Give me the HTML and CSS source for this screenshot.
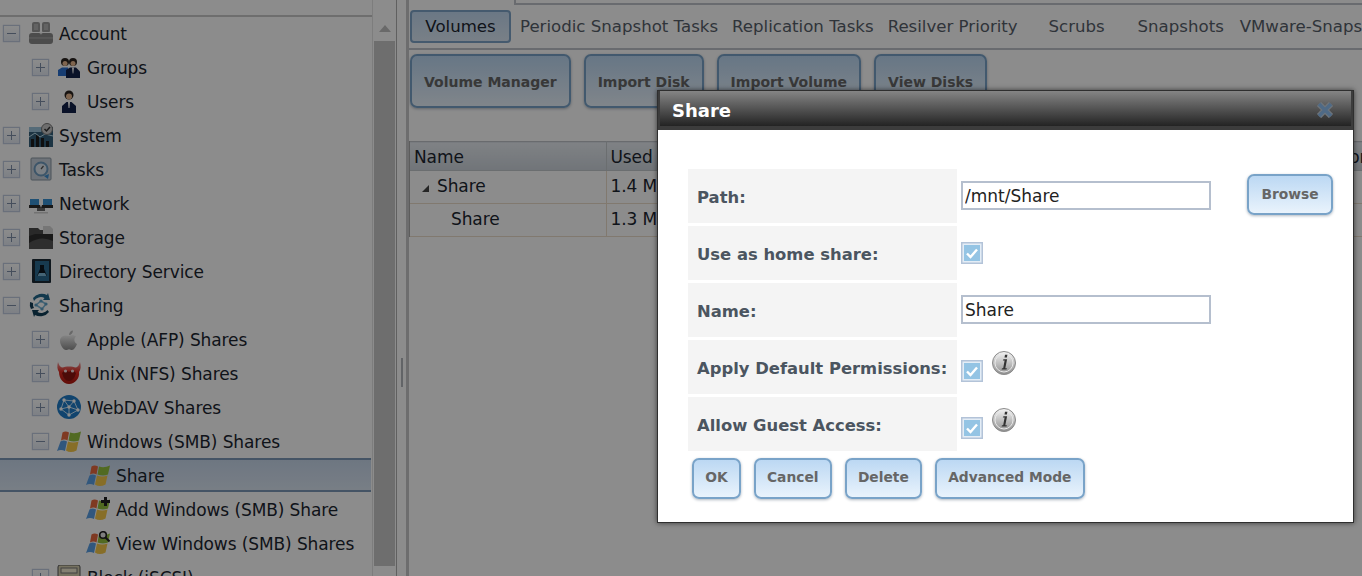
FILE: index.html
```html
<!DOCTYPE html>
<html lang="en">
<head>
<meta charset="utf-8">
<title>Share</title>
<link rel="stylesheet" href="styles.css">
</head>
<body>
<svg class="sprite" aria-hidden="true">
  <defs>
    <linearGradient id="metal" x1="0" y1="0" x2="0" y2="1"><stop offset="0" stop-color="#f4f4f4"/><stop offset="1" stop-color="#8e8e8e"/></linearGradient>
    <linearGradient id="red" x1="0" y1="0" x2="0" y2="1"><stop offset="0" stop-color="#f0a0a0"/><stop offset=".45" stop-color="#e02a20"/><stop offset="1" stop-color="#b01810"/></linearGradient>
    <symbol id="i-account" viewBox="0 0 24 24">
      <path d="M5 1h4q2 0 2 2v7q0 1-1 1H4q-1 0-1-1V3q0-2 2-2zM15 1h4q2 0 2 2v7q0 1-1 1h-6q-1 0-1-1V3q0-2 2-2z" fill="#9c9c9c"/>
      <path d="M3 12h7q2 0 2 2 0-2 2-2h7q3 0 3 3v5q0 3-3 3H3q-3 0-3-3v-5q0-3 3-3z" fill="#8b8b8b"/>
      <path d="M5 3h4v6H5zM15 3h4v6h-4z" fill="#b4b4b4"/>
      <path d="M0 17h24" stroke="#b0b0b0" stroke-width="1"/>
    </symbol>
    <symbol id="i-groups" viewBox="0 0 24 24">
      <circle cx="8" cy="7" r="4" fill="#2a2420"/><circle cx="16" cy="7" r="4" fill="#2a2420"/>
      <circle cx="8" cy="8.500" r="2.500" fill="#e8b890"/><circle cx="16" cy="8.500" r="2.500" fill="#e8b890"/>
      <path d="M1 21v-6l4-2.500h6v8.500z" fill="#2b6fd0"/><path d="M9 23v-8l4-2.500h6l4 4V23z" fill="#12214a"/><path d="M15 12.500h2l-.7 6h-.6z" fill="#fff"/>
    </symbol>
    <symbol id="i-user" viewBox="0 0 24 24">
      <circle cx="12" cy="6" r="4.500" fill="#2a2420"/><circle cx="12" cy="7.500" r="3" fill="#e8b890"/>
      <path d="M5 24v-7l4.500-4h5l4.500 4v7z" fill="#13214a"/><path d="M11 13h2l-.5 6h-1z" fill="#fff"/>
    </symbol>
    <symbol id="i-system" viewBox="0 0 24 24">
      <rect x="0" y="4" width="24" height="20" fill="#33607a"/>
      <path d="M0 4h16l-4 5H0z" fill="#9cc4da"/>
      <path d="M2 24v-8h3v8zM7 24v-12h3v12zM12 24v-9h3v9zM17 24v-6h3v6z" fill="#1c1c1c"/>
      <path d="M0 14l6-4 5 4 5-3 8 2" fill="none" stroke="#bfe0ef" stroke-width="1"/>
      <circle cx="18" cy="6" r="5.500" fill="#c8c8c8" stroke="#777"/>
      <path d="M15.500 6l2 2 3.500-4" fill="none" stroke="#333" stroke-width="1.500"/>
    </symbol>
    <symbol id="i-tasks" viewBox="0 0 24 24">
      <rect x="2" y="1" width="20" height="22" rx="1" fill="#c8d2dc" stroke="#8a98a4"/>
      <circle cx="12" cy="12" r="6.500" fill="#dfe8f0" stroke="#6f9cc0" stroke-width="2"/>
      <path d="M12 12l2.500-3" stroke="#555" stroke-width="1.200"/>
      <path d="M15 19l5-2-1 5z" fill="#3f8fd0"/>
    </symbol>
    <symbol id="i-network" viewBox="0 0 24 24">
      <path d="M1 8h9v6H1zM14 8h9v6h-9z" fill="#3a93d4"/>
      <path d="M0 14h11l1 3H0zM13 14h11v3H12z" fill="#2d2d2d"/>
      <path d="M8 17h8v3H8z" fill="#6a6a6a"/><path d="M5 21h14v1.500H5z" fill="#d0d0d0"/>
    </symbol>
    <symbol id="i-storage" viewBox="0 0 24 24">
      <path d="M0 3h9l2 2h13v19H0z" fill="#4c4c4c"/>
      <path d="M14 1h7l3 3v6H14z" fill="#d8d8d8"/>
      <path d="M0 24V11l6-2h18v15z" fill="#2f2f2f"/>
      <path d="M0 24V18q12-8 24-2v8z" fill="#545454"/>
    </symbol>
    <symbol id="i-directory" viewBox="0 0 24 24">
      <rect x="3" y="0" width="19" height="24" rx="1" fill="#1d2b36"/>
      <rect x="6" y="2" width="14" height="20" fill="#2b6a90"/>
      <path d="M11 6h4v4l3 7h-10l3-7z" fill="#0c1620"/><path d="M10 14h6l1.500 3h-9z" fill="#7db6d6"/>
    </symbol>
    <symbol id="i-sharing" viewBox="0 0 24 24">
      <path d="M4 5a11 11 0 0 1 14-3l1-2 2 7-7 0 1.500-2A8 8 0 0 0 5 8z" fill="#21688c"/>
      <path d="M20 19a11 11 0 0 1-14 3l-1 2-2-7 7 0-1.500 2a8 8 0 0 0 10-2z" fill="#123f58"/>
      <path d="M2 16a11 11 0 0 1-1-7l3 1a8 8 0 0 0 1 5z" fill="#153f58"/>
      <path d="M7 12l5-4 5 3-4 5z" fill="none" stroke="#7db6d6" stroke-width="1.600"/>
      <circle cx="12" cy="8" r="1.600" fill="#5da0c6"/><circle cx="17" cy="11" r="1.600" fill="#5da0c6"/><circle cx="7" cy="12" r="1.600" fill="#5da0c6"/><circle cx="13" cy="16" r="1.600" fill="#5da0c6"/>
    </symbol>
    <symbol id="i-apple" viewBox="0 0 24 24">
      <path d="M12 9c2-1.500 5-1.500 7 .5-2.500 2-2 6 1 7.500-1 2.500-3 6-5 6-1 0-2-.8-3-.8s-2 .8-3 .8c-2.500 0-6-5-6-9 0-5 5-6.500 9-5z" fill="url(#metal)"/>
      <path d="M12 8c0-2.500 2-4.500 4-4.500 0 2.500-2 4.500-4 4.500z" fill="#bdbdbd"/>
    </symbol>
    <symbol id="i-beastie" viewBox="0 0 24 24">
      <path d="M1 1c1 3 2 5 4 5.500 4-1.500 10-1.500 14 0 2-.5 3-2.500 4-5.500 1 4 1 7-1 10 1 6-4 12-10 12S2 17 2 11C0 8 0 5 1 1z" fill="url(#red)"/>
      <path d="M5 12q3-4 7-1 4-3 7 1-2 8-7 8t-7-8z" fill="#8a1410"/>
      <circle cx="8.500" cy="10" r="1.600" fill="#f6e0e0"/><circle cx="15.500" cy="10" r="1.600" fill="#f6e0e0"/>
    </symbol>
    <symbol id="i-globe" viewBox="0 0 24 24">
      <circle cx="12" cy="12" r="12" fill="#1f7dc8"/>
      <path d="M7 5l10 1 4 9-9 5-8-6zM7 5l5 7 9 3M12 12l-8 2M12 12v8M17 6l-5 6" fill="none" stroke="#cfe8fa" stroke-width="1"/>
      <circle cx="7" cy="5" r="1.700" fill="#fff"/><circle cx="17" cy="6" r="1.700" fill="#fff"/><circle cx="21" cy="15" r="1.700" fill="#fff"/><circle cx="12" cy="20" r="1.700" fill="#fff"/><circle cx="4" cy="14" r="1.700" fill="#fff"/><circle cx="12" cy="12" r="1.700" fill="#fff"/>
    </symbol>
    <symbol id="i-windows" viewBox="0 0 24 24">
      <path d="M5.500 3.500q3-2 6.500 0l-1.500 8q-3-2-6.500 0z" fill="#e8683e"/>
      <path d="M13 3.500q5 2 11-1l-2 9q-5 2-10.500 0z" fill="#94c23e"/>
      <path d="M3.500 12.500q3-2 6.500 0L8 22q-4-2-8 0z" fill="#5a9fe4"/>
      <path d="M11 12.500q5 2 10.500 0l-2 9q-6 3-10.500 0z" fill="#f6c84a"/>
    </symbol>
    <symbol id="i-plus-badge" viewBox="0 0 24 24">
      <path d="M18 0h3v3h3v3h-3v3h-3V6h-3V3h3z" fill="#222"/>
    </symbol>
    <symbol id="i-search-badge" viewBox="0 0 24 24">
      <circle cx="17" cy="4" r="3.300" fill="#e8e8e8" stroke="#222" stroke-width="1.600"/>
      <path d="M19.500 6.500l4 4" stroke="#222" stroke-width="2"/>
    </symbol>
    <symbol id="i-block" viewBox="0 0 24 24">
      <rect x="1" y="0" width="22" height="24" rx="2" fill="#d8d0b0" stroke="#555"/>
      <rect x="4" y="3" width="16" height="5" fill="#f0ead0" stroke="#777"/>
    </symbol>
    <symbol id="i-info" viewBox="0 0 24 24">
      <circle cx="12" cy="12" r="11.500" fill="url(#metal)" stroke="#8a8a8a"/>
      <circle cx="12" cy="12" r="9" fill="none" stroke="#e8e8e8" stroke-width="1"/>
      <path d="M11.500 8.200h3.600l-1.800 9h1.600l-.4 1.300H9.600l.4-1.300h1.200l1.400-7.700h-1.800zM13 3.800h2.400l-.5 2.800h-2.400z" fill="#333"/>
    </symbol>
    <symbol id="i-check" viewBox="0 0 22 22">
      <rect x="0.750" y="0.750" width="20.500" height="20.500" fill="#e4edf6" stroke="#b3c3d8" stroke-width="1.500"/>
      <rect x="3" y="3" width="16" height="16" fill="#94c4e4"/>
      <path d="M6 11.500l3.500 3.500 6.500-7.500" fill="none" stroke="#fff" stroke-width="2.400"/>
    </symbol>
  </defs>
</svg>

<div class="app">
  <aside class="sidebar">
    <div class="tree-wrap">
      <ul class="tree">
        <li class="row l0"><span class="exp open"></span><svg class="ic"><use href="#i-account"/></svg><span class="label">Account</span></li>
        <li class="row l1"><span class="exp"></span><svg class="ic"><use href="#i-groups"/></svg><span class="label">Groups</span></li>
        <li class="row l1"><span class="exp"></span><svg class="ic"><use href="#i-user"/></svg><span class="label">Users</span></li>
        <li class="row l0"><span class="exp"></span><svg class="ic"><use href="#i-system"/></svg><span class="label">System</span></li>
        <li class="row l0"><span class="exp"></span><svg class="ic"><use href="#i-tasks"/></svg><span class="label">Tasks</span></li>
        <li class="row l0"><span class="exp"></span><svg class="ic"><use href="#i-network"/></svg><span class="label">Network</span></li>
        <li class="row l0"><span class="exp"></span><svg class="ic"><use href="#i-storage"/></svg><span class="label">Storage</span></li>
        <li class="row l0"><span class="exp"></span><svg class="ic"><use href="#i-directory"/></svg><span class="label">Directory Service</span></li>
        <li class="row l0"><span class="exp open"></span><svg class="ic"><use href="#i-sharing"/></svg><span class="label">Sharing</span></li>
        <li class="row l1"><span class="exp"></span><svg class="ic"><use href="#i-apple"/></svg><span class="label">Apple (AFP) Shares</span></li>
        <li class="row l1"><span class="exp"></span><svg class="ic"><use href="#i-beastie"/></svg><span class="label">Unix (NFS) Shares</span></li>
        <li class="row l1"><span class="exp"></span><svg class="ic"><use href="#i-globe"/></svg><span class="label">WebDAV Shares</span></li>
        <li class="row l1"><span class="exp open"></span><svg class="ic"><use href="#i-windows"/></svg><span class="label">Windows (SMB) Shares</span></li>
        <li class="row l2 selected"><span class="exp none"></span><svg class="ic"><use href="#i-windows"/></svg><span class="label">Share</span></li>
        <li class="row l2"><span class="exp none"></span><svg class="ic"><use href="#i-windows"/><use href="#i-plus-badge"/></svg><span class="label">Add Windows (SMB) Share</span></li>
        <li class="row l2"><span class="exp none"></span><svg class="ic"><use href="#i-windows"/><use href="#i-search-badge"/></svg><span class="label">View Windows (SMB) Shares</span></li>
        <li class="row l1"><span class="exp"></span><svg class="ic"><use href="#i-block"/></svg><span class="label">Block (iSCSI)</span></li>
      </ul>
    </div>
    <div class="scrollbar"><span class="arrow"></span><span class="thumb"></span></div>
  </aside>
  <div class="splitter"><span class="grip"></span></div>
  <main class="main">
    <div class="top-tabs"><span class="top-tab"></span></div>
    <nav class="tabs">
      <span class="tab active">Volumes</span>
      <span class="tab">Periodic Snapshot Tasks</span>
      <span class="tab">Replication Tasks</span>
      <span class="tab">Resilver Priority</span>
      <span class="tab wide">Scrubs</span>
      <span class="tab wide">Snapshots</span>
      <span class="tab">VMware-Snapshots</span>
    </nav>
    <div class="toolbar">
      <span class="btn tall">Volume Manager</span>
      <span class="btn tall">Import Disk</span>
      <span class="btn tall">Import Volume</span>
      <span class="btn tall">View Disks</span>
    </div>
    <table class="grid">
      <thead>
        <tr><th class="c-name">Name</th><th class="c-used">Used</th><th class="c-a">Available</th><th class="c-b">Compression</th><th class="c-c">Compression Ratio</th><th class="c-d">Status</th><th class="c-d">Readonly</th><th>Comments</th></tr>
      </thead>
      <tbody>
        <tr><td><span class="twist"></span>Share</td><td>1.4 MiB</td><td></td><td></td><td></td><td></td><td></td><td></td></tr>
        <tr><td class="child">Share</td><td>1.3 MiB</td><td></td><td></td><td></td><td></td><td></td><td></td></tr>
      </tbody>
    </table>
  </main>
</div>

<div class="overlay"></div>

<section class="dialog">
  <header class="dialog-title"><h1>Share</h1><span class="close">
    <svg width="18" height="16" viewBox="0 0 18 16"><path d="M3 2l12 12M15 2L3 14" fill="none" stroke="#6f757b" stroke-width="6"/><path d="M3 2l12 12M15 2L3 14" fill="none" stroke="#4f6a86" stroke-width="3.500"/></svg></span></header>
  <div class="dialog-body">
    <table class="form">
      <tr><th>Path:</th><td><div class="path-cell"><input class="text" type="text" value="/mnt/Share"><span class="btn browse">Browse</span></div></td></tr>
      <tr><th>Use as home share:</th><td><svg class="check"><use href="#i-check"/></svg></td></tr>
      <tr><th>Name:</th><td><input class="text" type="text" value="Share"></td></tr>
      <tr><th>Apply Default Permissions:</th><td><div class="opt-cell"><svg class="check"><use href="#i-check"/></svg><svg class="info"><use href="#i-info"/></svg></div></td></tr>
      <tr><th>Allow Guest Access:</th><td><div class="opt-cell"><svg class="check"><use href="#i-check"/></svg><svg class="info"><use href="#i-info"/></svg></div></td></tr>
    </table>
    <div class="actions">
      <span class="btn">OK</span>
      <span class="btn">Cancel</span>
      <span class="btn">Delete</span>
      <span class="btn">Advanced Mode</span>
    </div>
  </div>
</section>
</body>
</html>
```

FILE: styles.css
```css
* { box-sizing: border-box; }
html, body { margin: 0; padding: 0; height: 576px; overflow: hidden; background: #fff; }
body { font-family: "DejaVu Sans", Verdana, sans-serif; font-size: 17px; letter-spacing: -0.1px; color: #1c2630; }
.sprite { position: absolute; width: 0; height: 0; }

.app { display: flex; height: 576px; }

.sidebar { width: 397px; flex: none; display: flex; border-right: 1px solid #b0b0b0; }
.tree-wrap { width: 372px; flex: none; padding-right: 1px; border-top: 2px solid #c8c8c8; margin-top: 15px; overflow: hidden; }
.tree { list-style: none; margin: -1px 0 0; padding: 0; }
.row { display: flex; align-items: center; height: 34px; padding-left: 3px; white-space: nowrap; }
.row.l1 { padding-left: 32px; }
.row.l1 .exp { margin-right: 8px; }
.row.l2 { padding-left: 60px; }
.row.selected { background: linear-gradient(#c8d8ec, #dbe6f3 ); border-top: 2px solid #7e9ab8; border-bottom: 2px solid #7e9ab8; }
.label { padding-top: 1px; }
.exp { position: relative; width: 17px; height: 17px; flex: none; margin-right: 9px; border: 1px solid #c2cde0; background: linear-gradient(#fff, #e4eaf3); box-shadow: 0 0 1px #b8c2d0; }
.exp::before { content: ""; position: absolute; left: 3px; right: 3px; top: 7px; height: 1px; background: #7f8fa8; }
.exp::after { content: ""; position: absolute; top: 3px; bottom: 3px; left: 7px; width: 1px; background: #7f8fa8; }
.exp.open::after { display: none; }
.exp.none { visibility: hidden; }
.ic { width: 24px; height: 24px; flex: none; margin-right: 6px; }

.scrollbar { position: relative; width: 24px; flex: none; background: #fff; border-left: 1px solid #e4e4e4; display: flex; flex-direction: column; align-items: center; }
.arrow { width: 0; height: 0; margin-top: 25px; border-left: 6px solid transparent; border-right: 6px solid transparent; border-bottom: 7px solid #c0c0c0; }
.thumb { width: 21px; height: 525px; margin-top: 9px; background: #c9c9c9; }

.splitter { width: 12px; flex: none; position: relative; background: #fff; border-right: 3px solid #c6c6c8; }
.grip { position: absolute; left: 4px; top: 358px; width: 2px; height: 29px; background: #b2b6bc; }

.main { flex: 1; min-width: 0; overflow: hidden; }
.top-tabs { height: 5px; border-bottom: 2px solid #c0c4ca; display: flex; }
.top-tab { width: 107px; height: 5px; border: 2px solid #c0c4ca; border-left: 0; border-top: 0; border-bottom: 0; background: #fff; }

.tabs { display: flex; align-items: center; height: 45px; padding-left: 1px; border-bottom: 2px solid #c0c4ca; white-space: nowrap; color: #57606a; font-size: 16.600px; letter-spacing: 0; }
.tab { display: block; padding: 0 7px; line-height: 29px; text-align: center; flex: none; }
.tab.wide { width: 104px; }
.tab.active { width: 101px; height: 33px; margin-right: 2px; line-height: 29px; border: 2px solid #7fa5c8; border-radius: 4px; background: linear-gradient(#c3daf2, #dce9f6); color: #1c2630; }

.btn { display: inline-flex; align-items: center; justify-content: center; height: 41px; padding: 0 11.200px 2px; border: 2px solid #79a3c8; border-radius: 7px; background: linear-gradient(#bcd8f3, #e9f3fc); box-shadow: 0 1px 3px #b0b8c0; font-weight: 700; font-size: 13.800px; letter-spacing: 0; color: #666; white-space: nowrap; }
.btn.browse { width: 86px; }
.toolbar { display: flex; gap: 13px; padding: 4px 0 0 1px; height: 91px; }
.btn.tall { height: 54px; padding: 2px 12px 0; font-size: 14px; }

.grid { border-collapse: collapse; table-layout: fixed; width: 1000px; margin-left: -1px; border-left: 2px solid #a8a8a8; }
.grid th { height: 29px; padding: 2px 4px 0; text-align: left; font-weight: 400; background: linear-gradient(#e8edf2, #cdd4dc); border-top: 1px solid #c0c4c8; border-right: 1px solid #c4c8cc; border-bottom: 1px solid #c4c8cc; white-space: nowrap; overflow: hidden; }
.grid td { height: 33px; padding: 0 4px 2px; border-bottom: 1px solid #ecdccb; white-space: nowrap; overflow: hidden; }
.grid td:first-child { border-right: 1px solid #ecdccb; }
.c-name { width: 197px; }
.c-used { width: 120px; }
.c-a { width: 120px; }
.c-b { width: 130px; }
.c-c { width: 177px; }
.c-d { width: 90px; }
.twist { display: inline-block; width: 0; height: 0; margin: 0 8px 0 8px; border-left: 7px solid transparent; border-bottom: 7px solid #444; }
.child { padding-left: 41px !important; }

.overlay { position: absolute; inset: 0; background: rgba(0, 0, 0, 0.45); }

.dialog { position: absolute; left: 657px; top: 90px; width: 697px; height: 433px; background: #fff; border: 1.500px solid #2f2f2f; box-shadow: 0 0 5px rgba(0, 0, 0, .6); }
.dialog-title { display: flex; align-items: center; justify-content: space-between; height: 38.500px; padding: 4px 17px 0 12px; border: solid #3c3c3c; border-width: 0 2px 4px; background: linear-gradient(#858585, #232323); }
.dialog-title h1 { margin: 0; font-size: 18px; font-weight: 700; letter-spacing: 0; color: #fff; }
.close { display: block; line-height: 0; }
.dialog-body { padding: 36px 0 0 27px; }

.form { border-collapse: separate; border-spacing: 3px; }
.form th { width: 269px; height: 54px; padding: 3px 9px 0; text-align: left; font-size: 16.400px; font-weight: 700; letter-spacing: 0; color: #4b5560; background: #f4f4f4; white-space: nowrap; }
.form td { padding: 0 0 0 1px; vertical-align: middle; }
.text { display: block; width: 250px; height: 29px; padding: 1px 2px 0; border: 2px solid #b5bfce; font: 17px "DejaVu Sans", Verdana, sans-serif; letter-spacing: 0; color: #222; background: #fff; outline: 0; border-radius: 0; }
.path-cell { display: flex; align-items: center; gap: 36px; }
.path-cell .btn { margin-top: -2px; }
.check { display: block; width: 22px; height: 22px; }
.opt-cell { display: flex; align-items: flex-start; gap: 9px; height: 54px; padding-top: 11px; }
.opt-cell .check { margin-top: 9px; }
.info { display: block; width: 24px; height: 24px; }

.actions { display: flex; gap: 13px; padding: 4px 0 0 7px; }
```
